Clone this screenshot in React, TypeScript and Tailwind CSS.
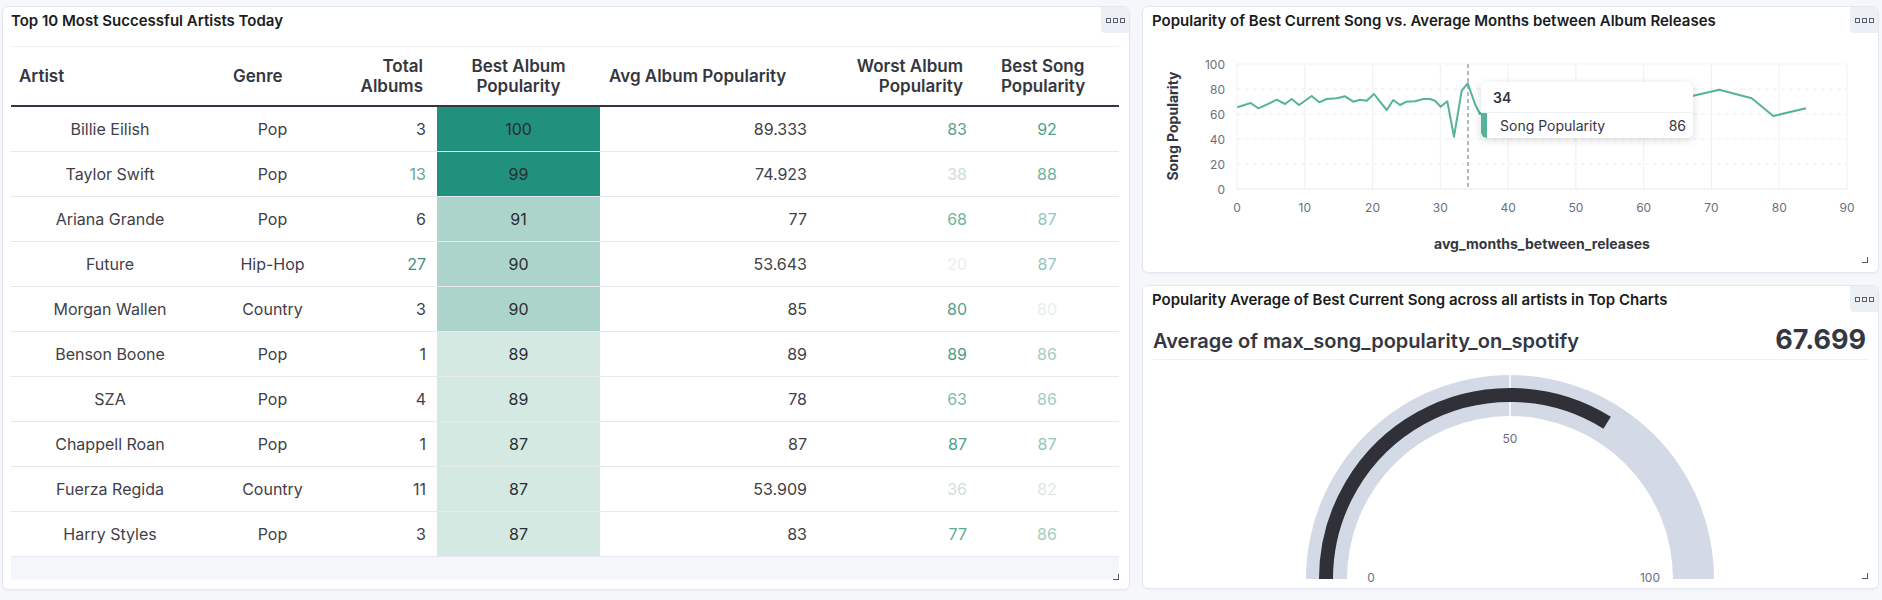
import React from 'react';

type Row = {
  artist: string;
  genre: string;
  total: string;
  totalC: string;
  best: string;
  bestBg: string;
  avg: string;
  worst: string;
  worstC: string;
  song: string;
  songC: string;
};

const rows: Row[] = [
  { artist: 'Billie Eilish', genre: 'Pop', total: '3', totalC: 'text-[#3f4149]', best: '100', bestBg: 'bg-[#21907c]', avg: '89.333', worst: '83', worstC: 'text-[#54a58f]', song: '92', songC: 'text-[#4fa38c]' },
  { artist: 'Taylor Swift', genre: 'Pop', total: '13', totalC: 'text-[#6aa79a]', best: '99', bestBg: 'bg-[#21907c]', avg: '74.923', worst: '38', worstC: 'text-[#c9e0d9]', song: '88', songC: 'text-[#6db3a0]' },
  { artist: 'Ariana Grande', genre: 'Pop', total: '6', totalC: 'text-[#3f4149]', best: '91', bestBg: 'bg-[#acd4ca]', avg: '77', worst: '68', worstC: 'text-[#6cb4a1]', song: '87', songC: 'text-[#93c7b9]' },
  { artist: 'Future', genre: 'Hip-Hop', total: '27', totalC: 'text-[#3f8f7b]', best: '90', bestBg: 'bg-[#acd4ca]', avg: '53.643', worst: '20', worstC: 'text-[#e8efed]', song: '87', songC: 'text-[#93c7b9]' },
  { artist: 'Morgan Wallen', genre: 'Country', total: '3', totalC: 'text-[#3f4149]', best: '90', bestBg: 'bg-[#acd4ca]', avg: '85', worst: '80', worstC: 'text-[#4fa38c]', song: '80', songC: 'text-[#e6efec]' },
  { artist: 'Benson Boone', genre: 'Pop', total: '1', totalC: 'text-[#3f4149]', best: '89', bestBg: 'bg-[#d5e9e3]', avg: '89', worst: '89', worstC: 'text-[#4a9f88]', song: '86', songC: 'text-[#a2cdc1]' },
  { artist: 'SZA', genre: 'Pop', total: '4', totalC: 'text-[#3f4149]', best: '89', bestBg: 'bg-[#d5e9e3]', avg: '78', worst: '63', worstC: 'text-[#78baa8]', song: '86', songC: 'text-[#a2cdc1]' },
  { artist: 'Chappell Roan', genre: 'Pop', total: '1', totalC: 'text-[#3f4149]', best: '87', bestBg: 'bg-[#d5e9e3]', avg: '87', worst: '87', worstC: 'text-[#4ca189]', song: '87', songC: 'text-[#93c7b9]' },
  { artist: 'Fuerza Regida', genre: 'Country', total: '11', totalC: 'text-[#3f4149]', best: '87', bestBg: 'bg-[#d5e9e3]', avg: '53.909', worst: '36', worstC: 'text-[#cce2dc]', song: '82', songC: 'text-[#dce9e5]' },
  { artist: 'Harry Styles', genre: 'Pop', total: '3', totalC: 'text-[#3f4149]', best: '87', bestBg: 'bg-[#d5e9e3]', avg: '83', worst: '77', worstC: 'text-[#5aab94]', song: '86', songC: 'text-[#a2cdc1]' },
];

function Dots() {
  return (
    <div className="absolute right-0 top-0 flex h-[26px] w-[28px] items-center justify-center gap-[2px] rounded-bl-[4px] rounded-tr-[6px] bg-[#eceff4]">
      <span className="h-[5px] w-[5px] border border-[#5a606b]" />
      <span className="h-[5px] w-[5px] border border-[#5a606b]" />
      <span className="h-[5px] w-[5px] border border-[#5a606b]" />
    </div>
  );
}

function Resize() {
  return <span className="absolute bottom-[9px] right-[10px] h-[6px] w-[6px] border-b-[1.5px] border-r-[1.5px] border-[#535966]" />;
}

const linePts: [number, number][] = [
  [1237.3, 108.3], [1250.7, 104], [1258.3, 109.3], [1266.7, 105.7], [1276.7, 100.7], [1285, 105], [1291.7, 100],
  [1299, 106], [1311.7, 97], [1319.3, 103.3], [1326.7, 100], [1336.7, 99.3], [1345, 97.3], [1353.3, 102.7],
  [1360, 100.7], [1366.7, 101.7], [1374, 95], [1380, 102.7], [1386.7, 111], [1393.3, 101], [1400, 106],
  [1406.7, 102.7], [1415, 102.3], [1423.3, 100], [1430, 100], [1435, 101.7], [1440.7, 107.7], [1447.3, 102.3],
  [1454, 137.7], [1461.7, 91.7], [1467.7, 84.3], [1475, 105], [1480, 115], [1490, 105], [1520, 100], [1560, 102],
  [1600, 98], [1640, 100], [1680, 97], [1693.3, 96.7], [1719.3, 90.7], [1751.7, 99.3], [1773.3, 117], [1806, 109.3],
];

function LineChart() {
  const xs = [0, 10, 20, 30, 40, 50, 60, 70, 80, 90];
  const ys = [0, 20, 40, 60, 80, 100];
  const X = (v: number) => 1237 + v * 6.778;
  const Y = (v: number) => 190 - v * 1.25;
  return (
    <svg className="block h-[232px] w-[735px]" viewBox="1143 41 735 232" fontFamily="Inter, sans-serif">
      {xs.map((v) => (
        <line key={'vx' + v} x1={X(v)} x2={X(v)} y1={65} y2={190} stroke="#eef0f3" strokeWidth={1} />
      ))}
      {ys.map((v) => (
        <line key={'hy' + v} x1={1237} x2={1847} y1={Y(v)} y2={Y(v)} stroke={v === 0 ? '#e6e9ee' : '#e9ecf0'} strokeWidth={1} strokeDasharray={v === 0 ? undefined : '4 4'} />
      ))}
      {ys.map((v) => (
        <text key={'ty' + v} x={1225} y={Y(v)} textAnchor="end" dominantBaseline="central" fontSize={12} fill="#69707d">{v}</text>
      ))}
      {xs.map((v) => (
        <text key={'tx' + v} x={X(v)} y={208} textAnchor="middle" dominantBaseline="central" fontSize={12} fill="#69707d">{v}</text>
      ))}
      <text x={1172} y={127} transform="rotate(-90 1172 127)" textAnchor="middle" dominantBaseline="central" fontSize={14} fontWeight={700} fill="#343741">Song Popularity</text>
      <text x={1542} y={244} textAnchor="middle" dominantBaseline="central" fontSize={14} fontWeight={700} fill="#343741">avg_months_between_releases</text>
      <line x1={1468} x2={1468} y1={65} y2={190} stroke="#69707d" strokeWidth={1} strokeDasharray="4 3" />
      <polyline points={linePts.map((p) => p.join(',')).join(' ')} fill="none" stroke="#54b399" strokeWidth={2} strokeLinejoin="round" />
    </svg>
  );
}

function Gauge() {
  const cx = 1510;
  const cy = 580;
  const pct = 0.67699;
  const th = Math.PI - pct * Math.PI;
  const r = 184;
  const ex = cx + r * Math.cos(th);
  const ey = cy - r * Math.sin(th);
  return (
    <svg className="block h-[228px] w-[735px]" viewBox="1143 361 735 228" fontFamily="Inter, sans-serif">
      <path d={`M ${cx - 204} ${cy} A 204 204 0 0 1 ${cx + 204} ${cy} L ${cx + 163} ${cy} A 163 163 0 0 0 ${cx - 163} ${cy} Z`} fill="#d3dae6" />
      <line x1={cx} x2={cx} y1={cy - 204} y2={cy - 163} stroke="#ffffff" strokeWidth={1.5} />
      <path d={`M ${cx - r} ${cy} A ${r} ${r} 0 0 1 ${ex} ${ey}`} fill="none" stroke="#2f3038" strokeWidth={14} />
      <text x={cx} y={439} textAnchor="middle" dominantBaseline="central" fontSize={12} fill="#69707d">50</text>
      <text x={1371} y={578} textAnchor="middle" dominantBaseline="central" fontSize={12} fill="#69707d">0</text>
      <text x={1650} y={578} textAnchor="middle" dominantBaseline="central" fontSize={12} fill="#69707d">100</text>
    </svg>
  );
}

export default function App() {
  return (
    <div className="flex h-[600px] w-[1882px] gap-[12px] bg-[#f5f7fa] pl-[2px] pt-[6px] font-['Inter',sans-serif]">
      {/* Left panel */}
      <div className="relative flex h-[584px] w-[1128px] flex-col rounded-[6px] border border-[#e3e8f0] bg-white shadow-[0_1px_2px_rgba(0,0,0,0.04)]">
        <div className="h-[39px] pl-[8px] pt-[4px] text-[15px] font-semibold leading-[20px] text-[#1a1c21]">Top 10 Most Successful Artists Today</div>
        <Dots />
        <div className="ml-[8px] w-[1108px] border-t border-[#eef0f3]">
          <div className="flex h-[60px] items-center border-b-2 border-[#343741] text-[17px] font-semibold leading-[20px] text-[#343741]">
            <div className="w-[198px] pl-[8px]">Artist</div>
            <div className="w-[127px] pl-[24px]">Genre</div>
            <div className="w-[101px] pr-[14px] text-right">Total<br />Albums</div>
            <div className="w-[163px] text-center">Best Album<br />Popularity</div>
            <div className="w-[215px] pl-[9px]">Avg Album Popularity</div>
            <div className="w-[160px] pr-[12px] text-right">Worst Album<br />Popularity</div>
            <div className="w-[144px] pl-[26px]">Best Song<br />Popularity</div>
          </div>
          {rows.map((r) => (
            <div key={r.artist} className="flex h-[45px] border-b border-[#e6e9ef] text-[16px] text-[#3f4149]">
              <div className="flex w-[198px] items-center justify-center">{r.artist}</div>
              <div className="flex w-[127px] items-center justify-center">{r.genre}</div>
              <div className={`flex w-[101px] items-center justify-end pr-[11px] ${r.totalC}`}>{r.total}</div>
              <div className={`flex w-[163px] items-center justify-center text-[#2b2d33] ${r.bestBg}`}>{r.best}</div>
              <div className="flex w-[215px] items-center justify-end pr-[8px]">{r.avg}</div>
              <div className={`flex w-[160px] items-center justify-end pr-[8px] ${r.worstC}`}>{r.worst}</div>
              <div className={`flex w-[144px] items-center justify-center ${r.songC}`}>{r.song}</div>
            </div>
          ))}
          <div className="h-[23px] bg-[#f4f6f9]" />
        </div>
        <Resize />
      </div>

      {/* Right column */}
      <div className="flex w-[737px] flex-col gap-[12px]">
        <div className="relative h-[267px] rounded-[6px] border border-[#e3e8f0] bg-white shadow-[0_1px_2px_rgba(0,0,0,0.04)]">
          <div className="h-[33px] pl-[9px] pt-[4px] text-[15px] font-semibold leading-[20px] text-[#1a1c21]">Popularity of Best Current Song vs. Average Months between Album Releases</div>
          <Dots />
          <LineChart />
          <div className="absolute left-[338px] top-[75px] w-[212px] overflow-hidden rounded-[6px] bg-white shadow-[0_2px_8px_rgba(0,0,0,0.15)]">
            <div className="flex h-[31px] items-center border-b border-[#eef0f3] pl-[12px] text-[14px] font-semibold text-[#343741]">34</div>
            <div className="flex h-[25px] items-center">
              <span className="h-full w-[6px] bg-[#54b399]" />
              <span className="flex-1 pl-[13px] text-[14px] text-[#343741]">Song Popularity</span>
              <span className="pr-[7px] text-[14px] text-[#343741]">86</span>
            </div>
          </div>
          <Resize />
        </div>

        <div className="relative flex h-[304px] flex-col rounded-[6px] border border-[#e3e8f0] bg-white shadow-[0_1px_2px_rgba(0,0,0,0.04)]">
          <div className="h-[30px] pl-[9px] pt-[4px] text-[15px] font-semibold leading-[20px] text-[#1a1c21]">Popularity Average of Best Current Song across all artists in Top Charts</div>
          <Dots />
          <div className="mx-[10px] flex h-[44px] items-center justify-between border-b border-[#eef0f3] pt-[6px]">
            <span className="text-[20px] font-semibold text-[#343741]">Average of max_song_popularity_on_spotify</span>
            <span className="pr-[2px] text-[27px] font-bold text-[#343741]">67.699</span>
          </div>
          <Gauge />
          <Resize />
        </div>
      </div>
    </div>
  );
}
